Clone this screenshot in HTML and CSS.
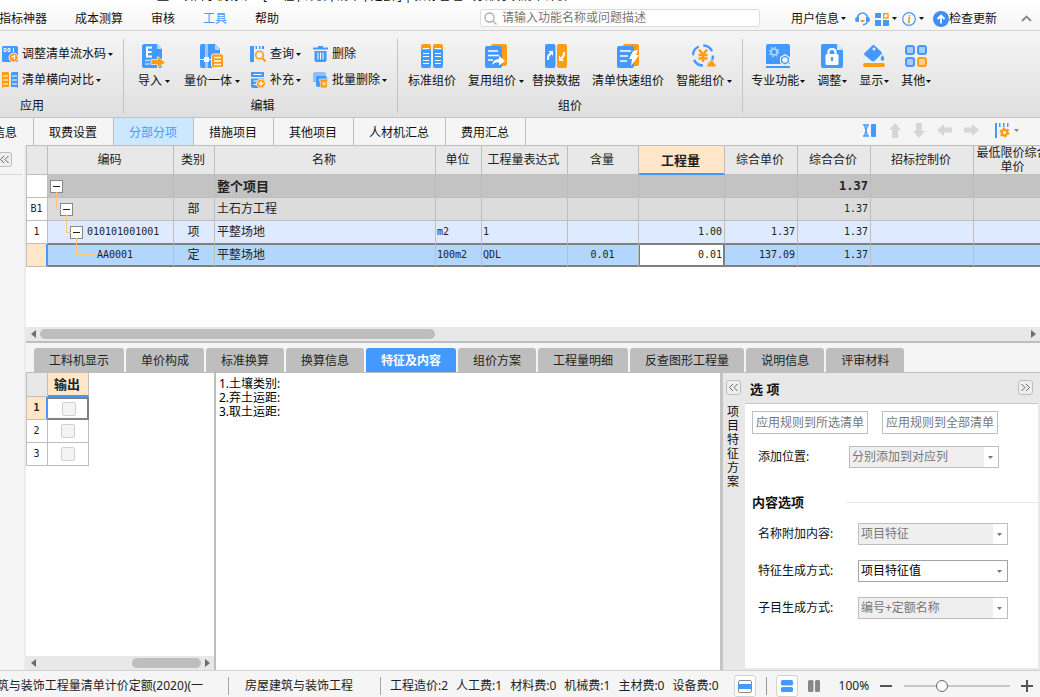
FILE: index.html
```html
<!DOCTYPE html>
<html lang="zh-CN">
<head>
<meta charset="utf-8">
<title>工程计价</title>
<link rel="stylesheet" href="styles.css">
</head>
<body>
<svg class="defs" aria-hidden="true">
  <symbol id="caret" viewBox="0 0 5 3"><path d="M0 0h5L2.500 3z" fill="currentColor"/></symbol>
  <symbol id="left" viewBox="0 0 5 8"><path d="M5 0v8L0 4z" fill="currentColor"/></symbol>
  <symbol id="right" viewBox="0 0 5 8"><path d="M0 0v8l5-4z" fill="currentColor"/></symbol>
  <symbol id="dleft" viewBox="0 0 15 15"><path d="M7 4 3.500 7.500 7 11M11.500 4 8 7.500l3.500 3.500" fill="none" stroke="#666"/></symbol>
  <symbol id="dright" viewBox="0 0 15 15"><path d="M3.500 4 7 7.500 3.500 11M8 4l3.500 3.500L8 11" fill="none" stroke="#666"/></symbol>
</svg>

<header class="top">
  <div class="titlebar"><span>整个项目示例标准 - [ 工程 , 计价 , 清单 , 定额 ] | 招标管理 - 分部分项清单计价</span></div>
  <div class="menubar">
    <nav class="menu">
      <a href="#">指标神器</a><a href="#">成本测算</a><a href="#">审核</a><a href="#" class="on">工具</a><a href="#">帮助</a>
    </nav>
    <label class="search">
      <svg width="13" height="13" viewBox="0 0 13 13" fill="none" stroke="#aaa" stroke-width="1.300"><circle cx="5.500" cy="5.500" r="4.500"/><path d="m9 9 3.500 3.500"/></svg>
      <input type="text" placeholder="请输入功能名称或问题描述" aria-label="搜索">
    </label>
    <div class="tools">
      <button class="user">用户信息<svg class="caret"><use href="#caret"/></svg></button>
      <button aria-label="客服"><svg width="15" height="14" viewBox="0 0 15 14" fill="none"><path d="M2.500 6a5 5 0 0 1 10 0M12.500 8.500Q12 12.500 8 12.800" stroke="#49f" stroke-width="1.600"/><path d="M2 5h2v5H2Q0 10 0 7.500T2 5zM11 5h2q2 0 2 2.500T13 10h-2z" fill="#49f"/><path d="M5 8h5q-1 2.200-2.500 2.200T5 8z" fill="#ff9c14"/></svg></button>
      <button aria-label="应用"><svg width="14" height="14" viewBox="0 0 14 14"><path d="M0 2q0-1 1-1h5v5H0zM0 8h6v6H1q-1 0-1-1zM8 8h6v5q0 1-1 1H8z" fill="#49f"/><rect x="8.700" y="1.700" width="4.300" height="4.300" fill="none" stroke="#ff9c14" stroke-width="1.400"/></svg><svg class="caret"><use href="#caret"/></svg></button>
      <button aria-label="关于"><svg width="14" height="14" viewBox="0 0 14 14" fill="none"><circle cx="7" cy="7" r="6.300" stroke="#49f" stroke-width="1.200"/><path d="M6 6h1.500l-1 4.500H8M7.500 3v1.500" stroke="#ff9c14" stroke-width="1.500"/></svg><svg class="caret"><use href="#caret"/></svg></button>
      <button class="update"><svg width="16" height="16" viewBox="0 0 16 16"><circle cx="8" cy="8" r="8" fill="#3f8ef5"/><path d="M8 12.500V5M4.500 8 8 4.500 11.500 8" fill="none" stroke="#fff" stroke-width="1.800"/></svg>检查更新</button>
      <button class="fold" aria-label="收起"><svg width="11" height="7" viewBox="0 0 11 7"><path d="m1 6 4.500-4.500L10 6" fill="none" stroke="#888" stroke-width="1.800"/></svg></button>
    </div>
  </div>
</header>

<section class="ribbon">
  <div class="group first">
    <div class="stack">
      <button class="small"><svg width="16" height="16" viewBox="0 0 16 16"><rect width="16" height="16" rx="1.500" fill="#49f"/><path d="M2 2.500h2v3H2zM6 2.500h2v3H6zM11.500 2v4" fill="none" stroke="#fff"/><circle cx="11.500" cy="11.500" r="4.500" fill="#ff9c14" stroke="#eee"/><path d="m9.500 11.500 3-2v4M3 8.500v.01M3 12.500v.01" fill="none" stroke="#fff" stroke-width="1.200"/></svg>调整清单流水码<svg class="caret"><use href="#caret"/></svg></button>
      <button class="small"><svg width="16" height="16" viewBox="0 0 16 16"><path d="M0 0h5.500Q7 0 7 1.500V15H1.500L0 16z" fill="#ff9c14"/><path d="M16 0h-5.500Q9 0 9 1.500V15h5.500l1.500 1z" fill="#49f"/><path d="M1 4h5M1 8h5M1 12h5M10 4h5M10 8h5M10 12h5" stroke="#fff"/></svg>清单横向对比<svg class="caret"><use href="#caret"/></svg></button>
    </div>
    <div class="caption">应用</div>
  </div>

  <div class="group edit">
    <div class="items">
      <button class="big"><svg width="24" height="24" viewBox="0 0 24 24"><path d="M3 0h12l5 5v17q0 2-2 2H3q-3 0-3-2V2q0-2 3-2z" fill="#49f"/><path d="M15 0v5h5z" fill="#b5d6ff"/><path d="M10 3.500H5v9h5M5 8h4.500" fill="none" stroke="#fff" stroke-width="2"/><path d="M3 16.500h5M3 20h5" stroke="#b5d6ff" stroke-width="1.500"/><path d="M9 15.500h6.500v-3l8 6-8 5.500v-3.500H9z" fill="#ff9c14" stroke="#eee" stroke-width=".8"/></svg><span>导入<svg class="caret"><use href="#caret"/></svg></span></button>
      <button class="big shift"><svg width="24" height="24" viewBox="0 0 24 24"><path d="M2 0h3v24H2q-2 0-2-2V2q0-2 2-2zM8 0h7l5 5v19H8z" fill="#49f"/><path d="M5 0h3v24H5z" fill="#9fcaff"/><path d="M15 0v6h5z" fill="#b5d6ff"/><path d="M0 15.500h11" stroke="#fff"/><path d="M4 13h5v5H4z" fill="#fff"/><rect x="11.500" y="10" width="12" height="13.500" rx="2" fill="#ff9c14" stroke="#eee"/><path d="M14 13.500h7M14 17h7M14 20.500h7" stroke="#fff" stroke-width="1.500"/></svg><span>量价一体<svg class="caret"><use href="#caret"/></svg></span></button>
      <div class="stack">
        <button class="small"><svg width="16" height="16" viewBox="0 0 16 16"><path d="M0 0h4v16H0zM5.500 0h1.500v3H5.500zM9 0h1.500v3H9zM12 0h2v3h-2z" fill="#49f"/><circle cx="9.500" cy="9" r="3.800" fill="none" stroke="#ff9c14" stroke-width="1.600"/><path d="m12 11.500 3.500 4" stroke="#ff9c14" stroke-width="2"/></svg>查询<svg class="caret"><use href="#caret"/></svg></button>
        <button class="small"><svg width="16" height="16" viewBox="0 0 16 16"><path d="M1 0h13v5H1zM1 6.500h13V16H3q-2 0-2-2z" fill="#49f"/><path d="M3.500 2.500h8M3.500 9h5M3.500 12.500h3" stroke="#fff" stroke-width="1.200"/><circle cx="11" cy="11.500" r="4.500" fill="#ff9c14" stroke="#eee"/><path d="M11 9v5M8.500 11.500h5" stroke="#fff" stroke-width="1.500"/></svg>补充<svg class="caret"><use href="#caret"/></svg></button>
      </div>
      <div class="stack">
        <button class="small"><svg width="15" height="16" viewBox="0 0 15 16"><path d="M5 0h5v1.500h5v2H0v-2h5zM1.500 5h12v9q0 2-2 2h-8q-2 0-2-2z" fill="#49f"/><path d="M5 6.500v7M7.500 6.500v7M10 6.500v7" stroke="#fff"/></svg>删除</button>
        <button class="small"><svg width="15" height="16" viewBox="0 0 15 16"><path d="M2 0h9q2 0 2 2v8H0V2q0-2 2-2z" fill="#8ec1ff"/><path d="M3 4h9q2 0 2 2v9H5q-2 0-2-2z" fill="#49f"/><path d="M6.500 7H15v2h-.7v5.500q0 1.500-1.500 1.500h-4q-1.500 0-1.500-1.500V9h-.8z" fill="#ff9c14" stroke="#fff" stroke-width=".5"/><path d="M9.500 10h3v3.500h-3z" fill="#ffd9a0"/></svg>批量删除<svg class="caret"><use href="#caret"/></svg></button>
      </div>
    </div>
    <div class="caption">编辑</div>
  </div>

  <div class="group price">
    <div class="items">
      <button class="big"><svg width="22" height="24" viewBox="0 0 22 24"><path d="M0 6V2q0-2 2-2h6q2 0 2 2v4zM12 6V2q0-2 2-2h6q2 0 2 2v4z" fill="#ff9c14"/><path d="M0 6h10v16q0 2-2 2H2q-2 0-2-2zM12 6h10v16q0 2-2 2h-6q-2 0-2-2z" fill="#49f"/><path d="M2 4.500h6M14 4.500h6M2 9.500h6M2 12.500h6M2 16.500h6M2 19.500h6M14 9.500h6M14 12.500h6M14 16.500h6M14 19.500h6" stroke="#fff" stroke-width="1.200"/></svg><span>标准组价</span></button>
      <button class="big more"><svg width="22" height="24" viewBox="0 0 22 24"><rect x="6" width="16" height="22" rx="2" fill="#ff9c14"/><rect y="2" width="17" height="22" rx="2" fill="#49f"/><path d="M3 7h10M3 11.500h11M3 16h5" stroke="#fff" stroke-width="1.600"/><path d="M7 21q1-6 7-6v-3l6 5-6 4.500v-3q-4-1-7 2.500z" fill="#fff"/></svg><span>复用组价<svg class="caret"><use href="#caret"/></svg></span></button>
      <button class="big"><svg width="22" height="24" viewBox="0 0 22 24"><rect width="10.500" height="24" rx="2" fill="#49f"/><rect x="12" width="10" height="24" rx="2" fill="#ff9c14"/><path d="M3 16q-.5-5 3-6.500M19 8q.5 4-2.500 6.500" fill="none" stroke="#fff" stroke-width="2"/><path d="M3.500 7H8v5zM14 11.500V17h5z" fill="#fff"/></svg><span>替换数据</span></button>
      <button class="big"><svg width="22" height="24" viewBox="0 0 22 24"><rect x="6" width="16" height="22" rx="2" fill="#ff9c14"/><rect y="2" width="17" height="22" rx="2" fill="#49f"/><path d="M3 7h11M3 12h8M3 17h7" stroke="#fff" stroke-width="1.700"/><path d="m16 7 5-1-2 5h3l-8 11 1-7h-3z" fill="#fff"/></svg><span>清单快速组价</span></button>
      <button class="big"><svg width="24" height="24" viewBox="0 0 24 24" fill="none"><circle cx="11" cy="11.500" r="10" stroke="#49f" stroke-width="2.400" stroke-dasharray="11 4.700"/><path d="m7 5.500 4 5 4-5M11 10v8M6.500 11h9M6.500 14.500h9" stroke="#ff9c14" stroke-width="2.400"/><path d="M15 23q-1-4 2-4 0-3 2.500-3T22 19q3 1 2 4z" fill="#ff9c14" stroke="#eee" stroke-width=".8"/></svg><span>智能组价<svg class="caret"><use href="#caret"/></svg></span></button>
    </div>
    <div class="caption">组价</div>
  </div>

  <div class="group other">
    <div class="items">
      <button class="big"><svg width="24" height="24" viewBox="0 0 24 24"><path d="M2 0h20q2 0 2 2v18H0V2q0-2 2-2zM0 22h24v2H0z" fill="#49f"/><circle cx="8" cy="8" r="3" fill="none" stroke="#b5d6ff" stroke-width="1.600"/><circle cx="8" cy="8" r="4.500" fill="none" stroke="#b5d6ff" stroke-width="1.500" stroke-dasharray="1.500 2.030"/><path d="m19 10 5 3v6l-5 3-5-3v-6z" fill="#eee"/><path d="m19 11.500 4 2.300v4.400l-4 2.300-4-2.300v-4.400z" fill="#49f"/><circle cx="19" cy="16" r="2.800" fill="#eee"/></svg><span>专业功能<svg class="caret"><use href="#caret"/></svg></span></button>
      <button class="big"><svg width="22" height="24" viewBox="0 0 22 24"><path d="M2 0h14l6 6v16q0 2-2 2H2q-2 0-2-2V2q0-2 2-2z" fill="#49f"/><path d="M16 0v6h6z" fill="#d5e8ff"/><rect x="4.500" y="10" width="13" height="11" rx="1.500" fill="#fff"/><path d="M7.500 11V8q0-3 3.500-3t3.500 3v3" fill="none" stroke="#fff" stroke-width="2.200"/><path d="M11 13v4" stroke="#49f" stroke-width="2"/></svg><span>调整<svg class="caret"><use href="#caret"/></svg></span></button>
      <button class="big"><svg width="22" height="24" viewBox="0 0 22 24"><path d="m11 1 7.500 7q1 1 0 2l-6.500 6.500q-2 2-4 0L1.500 11q-1-1 0-2L9.500 1.500Q10 .5 11 1zM19.500 11q2.500 3 1.500 5-1.500 1-3 0-1-2 1.500-5z" fill="#49f"/><circle cx="11" cy="5" r="1.500" fill="#eee"/><rect y="19" width="22" height="4" rx="2" fill="#ff9c14"/></svg><span>显示<svg class="caret"><use href="#caret"/></svg></span></button>
      <button class="big"><svg width="22" height="24" viewBox="0 0 22 24" fill="#a8cdfb" stroke="#49f" stroke-width="2"><rect x="1" y="2" width="8" height="8" rx="2"/><rect x="13" y="2" width="8" height="8" rx="2"/><rect x="1" y="14" width="8" height="8" rx="2"/><rect x="13" y="14" width="8" height="8" rx="2" fill="#ffce8b" stroke="#ff9c14"/></svg><span>其他<svg class="caret"><use href="#caret"/></svg></span></button>
    </div>
  </div>
</section>

<nav class="pages">
  <button class="cut"><span>工程信息</span></button><button>取费设置</button><button class="on">分部分项</button><button>措施项目</button><button>其他项目</button><button>人材机汇总</button><button>费用汇总</button>
  <div class="pagetools">
    <button aria-label="列宽"><svg width="14" height="13" viewBox="0 0 14 13"><path d="M0 1h6M0 12h6M1.500 1 4.500 12M4.500 1 1.500 12" stroke="#49f" stroke-width="1.300"/><rect x="8" width="5" height="13" rx="1" fill="#49f"/></svg></button>
    <button aria-label="上移"><svg width="12" height="15" viewBox="0 0 12 15"><path d="m6 0 6 7H9v8H3V7H0z" fill="#d6d6d6"/></svg></button>
    <button aria-label="下移"><svg width="12" height="15" viewBox="0 0 12 15"><path d="m6 15 6-7H9V0H3v8H0z" fill="#d6d6d6"/></svg></button>
    <button aria-label="升级"><svg width="15" height="12" viewBox="0 0 15 12"><path d="m0 6 7-6v3.500h8v5H7V12z" fill="#d6d6d6"/></svg></button>
    <button aria-label="降级"><svg width="15" height="12" viewBox="0 0 15 12"><path d="M15 6 8 0v3.500H0v5h8V12z" fill="#d6d6d6"/></svg></button>
    <button class="setup" aria-label="设置"><svg width="15" height="15" viewBox="0 0 15 15"><path d="M0 0h2v15H0zM4 0h1.500v4H4zM8 0h1.500v4H8zM12 0h1.500v4H12z" fill="#49f"/><circle cx="9.500" cy="9.500" r="2.800" fill="none" stroke="#ff9c14" stroke-width="2.400"/><circle cx="9.500" cy="9.500" r="4.300" fill="none" stroke="#ff9c14" stroke-width="1.500" stroke-dasharray="2.200 2.300"/></svg><svg class="caret"><use href="#caret"/></svg></button>
  </div>
</nav>

<main class="work">
  <aside class="rail"><button class="dbl" aria-label="展开"><svg width="15" height="15"><use href="#dleft"/></svg></button></aside>
  <div class="content">
    <section class="sheet">
      <table class="grid">
        <colgroup><col class="c-no"><col class="c-code"><col class="c-kind"><col class="c-name"><col class="c-unit"><col class="c-qty"><col class="c-cont"><col class="c-qty"><col class="c-sum"><col class="c-sum"><col class="c-ctl"><col class="c-low"></colgroup>
        <thead><tr><th></th><th>编码</th><th>类别</th><th>名称</th><th>单位</th><th>工程量表达式</th><th>含量</th><th class="cur">工程量</th><th>综合单价</th><th>综合合价</th><th>招标控制价</th><th>最低限价综合单价</th></tr></thead>
        <tbody>
          <tr class="total"><td class="no"></td><td><button class="toggle" aria-label="折叠"></button></td><td></td><td>整个项目</td><td></td><td></td><td></td><td></td><td></td><td class="num">1.37</td><td></td><td></td></tr>
          <tr class="part"><td class="no">B1</td><td><button class="toggle l2" aria-label="折叠"></button></td><td class="mid">部</td><td>土石方工程</td><td></td><td></td><td></td><td></td><td></td><td class="num">1.37</td><td></td><td></td></tr>
          <tr class="item"><td class="no">1</td><td class="code"><button class="toggle l3" aria-label="折叠"></button>010101001001</td><td class="mid">项</td><td>平整场地</td><td class="code">m2</td><td class="code">1</td><td></td><td class="num">1.00</td><td class="num">1.37</td><td class="num">1.37</td><td></td><td></td></tr>
          <tr class="sel"><td class="no"></td><td class="code"><span class="leaf">AA0001</span></td><td class="mid">定</td><td>平整场地</td><td class="code">100m2</td><td class="code">QDL</td><td class="mid code">0.01</td><td class="num focus">0.01</td><td class="num">137.09</td><td class="num">1.37</td><td></td><td></td></tr>
        </tbody>
      </table>
      <div class="scroll wide"><svg width="5" height="8"><use href="#left"/></svg><div class="track"><div class="thumb"></div></div><svg width="5" height="8"><use href="#right"/></svg></div>
    </section>

    <nav class="subtabs">
      <button>工料机显示</button><button>单价构成</button><button>标准换算</button><button>换算信息</button><button class="on">特征及内容</button><button>组价方案</button><button>工程量明细</button><button>反查图形工程量</button><button>说明信息</button><button>评审材料</button>
    </nav>

    <section class="panels">
      <div class="output">
        <table class="outgrid">
          <thead><tr><th></th><th class="cur">输出</th></tr></thead>
          <tbody>
            <tr class="active"><td class="no">1</td><td><input type="checkbox" aria-label="输出 1"></td></tr>
            <tr><td class="no">2</td><td><input type="checkbox" aria-label="输出 2"></td></tr>
            <tr><td class="no">3</td><td><input type="checkbox" aria-label="输出 3"></td></tr>
          </tbody>
        </table>
        <div class="scroll"><svg width="5" height="8"><use href="#left"/></svg><div class="track end"><div class="thumb"></div></div><svg width="5" height="8"><use href="#right"/></svg></div>
      </div>
      <textarea class="feature" aria-label="项目特征">1.土壤类别:
2.弃土运距:
3.取土运距:</textarea>
      <div class="plan"><button class="dbl" aria-label="展开方案"><svg width="15" height="15"><use href="#dleft"/></svg></button><span>项目特征方案</span></div>
      <div class="options">
        <div class="opthead"><h2>选 项</h2><button class="dbl" aria-label="收起选项"><svg width="15" height="15"><use href="#dright"/></svg></button></div>
        <div class="optbody">
          <div class="apply"><button>应用规则到所选清单</button><button>应用规则到全部清单</button></div>
          <div class="field place"><label for="pos">添加位置:</label><span class="pick"><select id="pos" disabled><option>分别添加到对应列</option></select><svg class="caret"><use href="#caret"/></svg></span></div>
          <h3>内容选项</h3>
          <div class="field"><label for="f1">名称附加内容:</label><span class="pick"><select id="f1" disabled><option>项目特征</option></select><svg class="caret"><use href="#caret"/></svg></span></div>
          <div class="field"><label for="f2">特征生成方式:</label><span class="pick"><select id="f2"><option>项目特征值</option></select><svg class="caret"><use href="#caret"/></svg></span></div>
          <div class="field"><label for="f3">子目生成方式:</label><span class="pick"><select id="f3" disabled><option>编号+定额名称</option></select><svg class="caret"><use href="#caret"/></svg></span></div>
        </div>
      </div>
    </section>
  </div>
</main>

<footer class="status">
  <div class="norm"><span>建筑与装饰工程量清单计价定额(2020)(一</span></div>
  <div class="major">房屋建筑与装饰工程</div>
  <div class="costs"><span>工程造价:2</span><span>人工费:1</span><span>材料费:0</span><span>机械费:1</span><span>主材费:0</span><span>设备费:0</span></div>
  <div class="single"><button class="view boxed" aria-label="单栏"><svg width="14" height="13" viewBox="0 0 14 13"><rect x=".5" y=".5" width="13" height="12" rx="1.500" fill="#fff" stroke="#888"/><path d="M0 4h14v5H0z" fill="#49f"/></svg></button></div>
  <div class="zoom">
    <button class="view boxed" aria-label="上下布局"><svg width="12" height="12" viewBox="0 0 12 12" fill="#49f"><rect width="12" height="5.500" rx="1.500"/><rect y="7" width="12" height="5" rx="1.500"/></svg></button>
    <button class="view" aria-label="左右布局"><svg width="12" height="12" viewBox="0 0 12 12" fill="#888"><rect width="5.500" height="12" rx="1.500"/><rect x="7" width="5" height="12" rx="1.500"/></svg></button>
    <span class="pct">100%</span>
    <button aria-label="缩小"><svg width="12" height="12"><path d="M0 6h12" stroke="#555" stroke-width="2"/></svg></button>
    <input type="range" min="0" max="100" value="34" aria-label="缩放">
    <button aria-label="放大"><svg width="12" height="12"><path d="M0 6h12M6 0v12" stroke="#555" stroke-width="2"/></svg></button>
  </div>
</footer>
</body>
</html>
```

FILE: styles.css
```css
* { box-sizing: border-box; }
html, body { height: 100%; }
body {
  margin: 0;
  display: flex;
  flex-direction: column;
  overflow: hidden;
  background: #f5f5f5;
  color: #111;
  font: 12px/16px "Noto Sans", "Noto Sans CJK SC", sans-serif;
}
button, input, select, textarea { font: inherit; color: inherit; }
button { margin: 0; padding: 0; border: 0; background: none; white-space: nowrap; display: flex; align-items: center; }
a { color: inherit; text-decoration: none; }
svg { display: block; flex: none; }
.defs { position: absolute; width: 0; height: 0; }
.caret { width: 5px; height: 3px; }

/* title and menu */
.top { flex: none; background: linear-gradient(#fff, #f5f5f5); border-bottom: 1px solid #d2d2d2; }
.titlebar { height: 3px; display: flex; align-items: flex-end; overflow: hidden; padding-left: 157px; line-height: 14px; white-space: nowrap; }
.menubar { display: flex; align-items: center; height: 27px; padding: 5px 8px 0 0; }
.menu { display: flex; gap: 28px; margin-left: -1px; white-space: nowrap; }
.menu .on { color: #4499ff; }
.search { display: flex; align-items: center; gap: 5px; width: 280px; height: 18px; margin-left: auto; margin-bottom: 2px; padding: 0 3px; background: #fff; border: 1px solid #ddd; border-radius: 3px; }
.search input { flex: 1; min-width: 0; height: 16px; padding: 0; border: 0; outline: 0; background: none; }
.search input::placeholder { color: #777; opacity: 1; }
.tools { display: flex; align-items: center; margin: 0 0 1px 31px; gap: 5px; }
.tools button { gap: 3px; }
.tools .user { gap: 2px; margin-right: 4px; }
.tools .update { gap: 0; margin-left: 4px; }
.tools .fold { margin-left: 19px; }

/* ribbon */
.ribbon { flex: none; display: flex; padding: 8px 0 4px; background: linear-gradient(#f5f5f5, #dfdfdf); border-bottom: 1px solid #c4c4c4; }
.group { display: flex; flex-direction: column; justify-content: space-between; height: 74px; border-right: 1px solid #c4c4c4; }
.items { display: flex; align-items: flex-start; }
.caption { text-align: center; line-height: 14px; }
.first { width: 124px; padding-left: 2px; }
.first .caption { text-align: left; padding-left: 18px; }
.edit { padding: 0 10px 0 14px; }
.edit .items { gap: 12px; }
.edit .shift { margin: 0 -2px 0 2px; }
.price { padding: 0 10px; }
.price .items { gap: 12px; }
.price .more { margin-right: -4px; }
.other { padding-left: 8px; border-right: 0; }
.other .items { gap: 12px; }
.big { flex-direction: column; gap: 4px; padding-top: 5px; line-height: 18px; }
.big span { display: flex; align-items: center; gap: 3px; }
.other .big span { gap: 1px; }
.stack { display: flex; flex-direction: column; gap: 8px; padding-top: 6px; }
.small { gap: 4px; height: 18px; }
.small .caret { margin-left: -2px; }

/* page tabs */
.pages { flex: none; display: flex; height: 27px; }
.pages > button { padding: 2px 16px 0 15px; border-right: 1px solid #bebebe; }
.pages > .cut { width: 34px; justify-content: flex-end; overflow: hidden; padding-left: 0; }
.pages > .on { background: #cce8ff; color: #4499ff; }
.pagetools { display: flex; align-items: center; gap: 12px; margin-left: auto; padding: 0 21px 3px 0; }
.setup { gap: 4px; margin-left: 4px; color: #888; }

/* work area */
.work { flex: 1; min-height: 0; display: flex; }
.rail { width: 26px; flex: none; padding-top: 7px; border-right: 2px solid #ececec; }
.dbl { width: 15px; height: 15px; justify-content: center; border: 1px solid #bebebe; border-radius: 3px; background: #eee; }
.rail .dbl { margin-left: -3px; }
.rail::after { content: ""; display: block; width: 22px; margin-top: 7px; border-top: 1px solid #d8d8d8; }
.content { flex: 1; min-width: 0; display: flex; flex-direction: column; }
.sheet { flex: none; height: 198px; display: flex; flex-direction: column; justify-content: space-between; overflow: hidden; background: #fff; border-bottom: 2px solid #bebebe; border-top: 1px solid #bebebe; }
table { border-collapse: separate; border-spacing: 0; table-layout: fixed; }
th, td { height: 23px; padding: 0 2px 0 1px; border-right: 1px solid #bebebe; border-bottom: 1px solid #bebebe; overflow: hidden; white-space: nowrap; font-weight: 400; text-align: left; line-height: 14px; color: #222; }
th { background: #e8e8e8; text-align: center; }
.grid { width: 1028px; border-left: 1px solid #bebebe; }
.grid th { height: 29px; padding-right: 3px; white-space: normal; }
.grid td:nth-child(4) { padding-left: 2px; }
.grid td:nth-child(2) { overflow: visible; padding-left: 2px; }
.c-no { width: 21px; } .c-code { width: 126px; } .c-kind { width: 41px; } .c-name { width: 221px; }
.c-unit { width: 46px; } .c-qty { width: 86px; } .c-cont { width: 71px; } .c-sum { width: 73px; }
.c-ctl { width: 103px; } .c-low { width: 80px; }
th.cur { background: #ffe6c8; font-weight: 700; font-size: 13px; border-bottom: 2px solid #4499ff; }
.num, .code, .no { font-family: "DejaVu Sans Mono", "Liberation Mono", monospace; font-size: 10px; }
.num { text-align: right; }
.mid { text-align: center; }
td.no { text-align: center; background: #fff; }
.total td { background: #c3c3c3; font-weight: 700; font-size: 13px; }
.total td.num { font-size: 12px; }
.total td.no, .part td.no, .item td.no { background: #fff; }
.part td { background: #dcdcdc; }
.item td { background: #deeaff; }
.item td:not(.no) { border-bottom-color: #808080; }
.sel td { background: #b3d6ff; border-bottom: 2px solid #808080; box-shadow: inset 0 1px #808080; }
.sel td.no { background: #ffe6c8; border-bottom: 1px solid #bebebe; border-right: 2px solid #4499ff; box-shadow: none; }
.sel td.focus { background: #fff; border-right: 2px solid #808080; box-shadow: inset 1px 1px #808080; padding-right: 1px; }
.toggle { position: relative; display: inline-block; vertical-align: middle; width: 13px; height: 13px; background: #fff; border: 1px solid #888; }
.toggle::after { content: ""; display: block; width: 7px; height: 1px; margin: 5px auto; background: #222; }
.l2 { margin-left: 10px; }
.l3 { margin-left: 20px; margin-right: 4px; }
.l2::before, .l3::before { content: ""; position: absolute; left: -5px; bottom: 5px; width: 4px; height: 17px; border: solid #ffc878; border-width: 0 0 1px 1px; }
.leaf { position: relative; display: block; margin-left: 47px; }
.leaf::before { content: ""; position: absolute; left: -21px; bottom: 7px; width: 18px; height: 16px; border: solid #ffc878; border-width: 0 0 1px 1px; }

/* scroll bars */
.scroll { display: flex; align-items: center; gap: 4px; height: 14px; padding: 0 4px 0 5px; background: #e8e8e8; color: #6c6c78; }
.track { flex: 1; display: flex; }
.thumb { width: 40%; height: 10px; border-radius: 5px; background: #bebebe; }
.end { justify-content: flex-end; }

/* lower tabs */
.subtabs { flex: none; display: flex; gap: 2px; padding: 5px 0 0 8px; border-bottom: 1px solid #bebebe; }
.subtabs button { height: 24px; padding: 2px 15px 0; background: #bebebe; border-radius: 3px 3px 0 0; color: #222; }
.subtabs .on { background: #4499ff; color: #fff; font-weight: 700; }

/* lower panels */
.panels { flex: 1; min-height: 0; display: flex; background: #fff; }
.output { width: 190px; flex: none; display: flex; flex-direction: column; justify-content: space-between; border-right: 2px solid #bebebe; }
.outgrid { width: 63px; border-left: 1px solid #bebebe; }
.outgrid th { height: 24px; padding-right: 3px; }
.outgrid th:first-child, .outgrid td:first-child { width: 21px; }
.outgrid .active td { border: 2px solid #808080; border-left: 0; padding: 0 1px 0 3px; }
.outgrid .active td.no { padding: 0 1px; background: #ffe6c8; font-weight: 700; border: 0; border-bottom: 1px solid #bebebe; border-right: 2px solid #4499ff; }
.output input { appearance: none; display: block; width: 14px; height: 14px; margin: 0 auto; border: 1px solid #d0d0d0; border-radius: 2px; background: #f3f3f3; }
.output .thumb { width: 43%; }
.feature { flex: 1; min-width: 0; padding: 4px 3px; border: 0; outline: 0; resize: none; line-height: 14px; background: #fff; color: #000; }
.plan { width: 25px; flex: none; display: flex; flex-direction: column; align-items: center; gap: 10px; padding: 7px 2px 0 0; background: #e8e8e8; border-left: 3px solid #c4c4c4; }
.plan span { width: 12px; line-height: 14px; }
.options { width: 295px; flex: none; display: flex; flex-direction: column; border: solid #e8e8e8; border-width: 0 2px 2px 0; }
.opthead { display: flex; align-items: center; justify-content: space-between; height: 31px; padding: 2px 5px 0; background: #e8e8e8; border-bottom: 1px solid #c8c8c8; }
.opthead .dbl { margin-bottom: 4px; }
.opthead h2, h3 { margin: 0; font-size: 13px; line-height: 18px; }
.optbody { padding: 7px 0 0 7px; }
.apply { display: flex; gap: 14px; }
.apply button { height: 23px; padding: 1px 3px 0; border: 1px solid #bebebe; color: #777; }
.field { display: flex; align-items: center; height: 22px; margin-bottom: 15px; padding-left: 6px; }
.field label { width: 100px; }
.place { margin: 12px 0 25px; }
.place label { width: 91px; }
.pick { position: relative; }
.pick select { appearance: none; display: block; width: 150px; height: 22px; padding: 0 2px; border: 1px solid #a4a4a4; border-radius: 0; background: #fff; color: #000; }
.pick select:disabled { opacity: 1; color: #777; border-color: #bebebe; background: linear-gradient(90deg, #efefef 134px, #fff 134px); }
.pick .caret { position: absolute; right: 6px; top: 10px; color: #777; pointer-events: none; }
h3 { display: flex; align-items: center; margin-bottom: 12px; }
h3::after { content: ""; flex: 1; margin-left: 42px; border-top: 1px solid #e8e8e8; }

/* status bar */
.status { flex: none; display: flex; align-items: center; height: 27px; border-top: 1px solid #d2d2d2; padding-top: 4px; color: #222; white-space: nowrap; }
.norm, .major, .costs, .single { flex: none; display: flex; align-items: center; height: 18px; }
.norm { width: 229px; justify-content: flex-end; overflow: hidden; padding-right: 25px; border-right: 1px solid #a0a8b4; }
.major { width: 152px; padding-left: 16px; border-right: 1px solid #a0a8b4; }
.costs { gap: 8px; padding: 0 15px 0 9px; }
.single { padding-right: 10px; border-right: 1px solid #999; }
.view { flex: none; width: 22px; height: 22px; justify-content: center; }
.boxed { background: #fff; border: 1px solid #d2d2d2; border-radius: 3px; }
.zoom { flex: 1; min-width: 0; display: flex; align-items: center; padding: 0 7px 0 9px; }
.zoom .view + .view { margin-left: 5px; }
.pct { margin: 0 11px 0 14px; }
.zoom input { appearance: none; flex: 1; min-width: 0; height: 12px; margin: 0 11px 0 12px; background: linear-gradient(#c8c8c8, #c8c8c8) center / 100% 2px no-repeat; }
.zoom input::-webkit-slider-thumb { appearance: none; width: 12px; height: 12px; border: 1px solid #666; border-radius: 50%; background: #fff; }
```
